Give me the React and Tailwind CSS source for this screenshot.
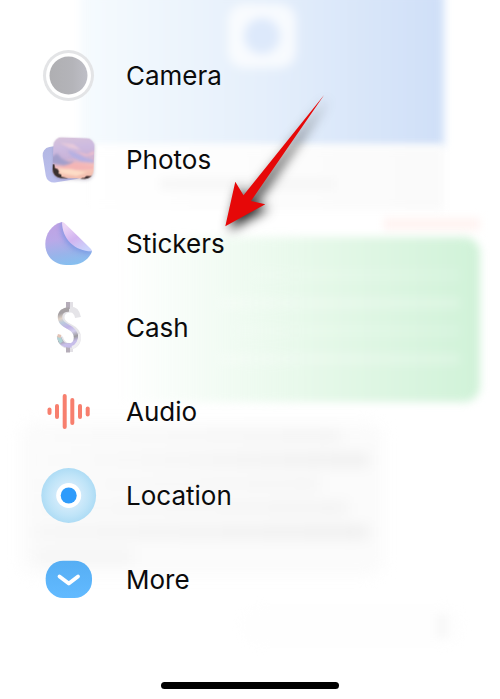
import React from 'react';

const CameraIcon = () => (
  <svg viewBox="0 0 56 56" className="h-14 w-14 shrink-0" aria-hidden="true">
    <defs>
      <linearGradient id="lens" x1="0" x2="1" y1="0" y2="0">
        <stop offset="0" stopColor="#afafb2" />
        <stop offset="0.6" stopColor="#b4b4b9" />
        <stop offset="1" stopColor="#bfbfc7" />
      </linearGradient>
    </defs>
    <circle cx="27.5" cy="27.5" r="25.5" fill="#e3e4e6" />
    <circle cx="27.5" cy="27.5" r="22.5" fill="#ffffff" />
    <circle cx="27.5" cy="27.5" r="19" fill="url(#lens)" />
  </svg>
);

const PhotosIcon = () => (
  <svg viewBox="0 0 56 56" className="h-14 w-14 shrink-0 overflow-visible" aria-hidden="true">
    <defs>
      <linearGradient id="sky" x1="0" x2="0.15" y1="0" y2="1">
        <stop offset="0" stopColor="#d8c3d9" />
        <stop offset="0.3" stopColor="#cdbbe0" />
        <stop offset="0.55" stopColor="#c9b3d8" />
        <stop offset="0.72" stopColor="#eebabf" />
        <stop offset="0.88" stopColor="#f8cbb8" />
        <stop offset="1" stopColor="#f3bfb0" />
      </linearGradient>
      <linearGradient id="backCard" x1="0" x2="0" y1="0" y2="1">
        <stop offset="0" stopColor="#b3b7e3" />
        <stop offset="1" stopColor="#bcc0ee" />
      </linearGradient>
      <clipPath id="photoClip">
        <rect x="12" y="5.5" width="41" height="41" rx="8.5" />
      </clipPath>
      <filter id="photoShadow" x="-20%" y="-20%" width="140%" height="140%" colorInterpolationFilters="sRGB">
        <feDropShadow dx="0.5" dy="1.5" stdDeviation="1.4" floodColor="#4b3b66" floodOpacity="0.25" />
      </filter>
      <filter id="cloud" x="-20%" y="-20%" width="140%" height="140%" colorInterpolationFilters="sRGB">
        <feGaussianBlur stdDeviation="1.3" />
      </filter>
    </defs>
    <rect x="3" y="13" width="38" height="36" rx="8" fill="url(#backCard)" transform="rotate(-9 22 31)" />
    <g transform="rotate(2 32 26)" filter="url(#photoShadow)">
      <g clipPath="url(#photoClip)">
        <rect x="12" y="5.5" width="41" height="41" fill="url(#sky)" />
        <g filter="url(#cloud)">
          <path d="M10 26 L16 22 L21 27 L28 30 L33 29 L29 33 L24 34 L10 32 Z" fill="#a39fcb" />
          <path d="M26 18 L34 21 L44 25 L53 27 L53 30 L40 29 L30 24 Z" fill="#b5b0e2" />
          <path d="M18 11 L32 12 L40 18 L28 16 Z" fill="#e6c9da" />
          <path d="M34 19 L46 22 L53 18 L53 22 L44 24 Z" fill="#eebecb" />
          <path d="M20 35 L32 31 L53 33 L53 37 L36 38 L22 38 Z" fill="#f4b5b5" />
          <path d="M18 37 L30 37 L46 40 L36 44 L20 41 Z" fill="#fddcc6" />
        </g>
        <path d="M12 33 L13.500 33 L14.500 37 L17 37.500 L18.500 40 L18 42 L21 43 L21 45 L26 46 L28 47 L12 47 Z" fill="#3a302f" />
        <path d="M40 47 L42 45.500 L44 45.500 L46 43.500 L50 43.500 L53 42 L53 47 Z" fill="#3a2b2d" />
      </g>
    </g>
  </svg>
);

const StickersIcon = () => (
  <svg viewBox="0 0 56 56" className="h-14 w-14 shrink-0" aria-hidden="true">
    <defs>
      <linearGradient id="stickerBody" x1="0.35" x2="0.5" y1="0" y2="0.9">
        <stop offset="0" stopColor="#c2a0e2" />
        <stop offset="0.45" stopColor="#b9a9e8" />
        <stop offset="0.75" stopColor="#98b4ea" />
        <stop offset="1" stopColor="#84c0f0" />
      </linearGradient>
      <linearGradient id="stickerFold" x1="0.2" x2="0.75" y1="0.1" y2="0.95">
        <stop offset="0" stopColor="#ecd6f5" />
        <stop offset="0.5" stopColor="#d2b4f0" />
        <stop offset="1" stopColor="#cbd2fb" />
      </linearGradient>
      <clipPath id="stickerClip">
        <path d="M21 6 C10.500 8.500 4.300 18 4.300 28 C4.300 41 14 49 25 49 L30 49 C40 49 48.500 43 51 35.300 Z" />
      </clipPath>
      <filter id="foldShadow" x="-30%" y="-30%" width="160%" height="160%" colorInterpolationFilters="sRGB">
        <feGaussianBlur stdDeviation="2.5" />
      </filter>
    </defs>
    <g clipPath="url(#stickerClip)">
      <rect width="56" height="56" fill="url(#stickerBody)" />
      <path d="M20 4 C18 20 26 37 53 38 Z" fill="#6a8ee2" opacity="0.65" filter="url(#foldShadow)" />
    </g>
    <path d="M21 6 C22.500 6 23.500 7 25 8.500 L49 32 C50.500 33.500 51 34.500 51 35.300 C34 35.500 21 23 21 6 Z" fill="url(#stickerFold)" />
  </svg>
);

const CashIcon = () => (
  <svg viewBox="0 0 56 56" className="h-14 w-14 shrink-0" aria-hidden="true">
    <defs>
      <linearGradient id="foil" x1="20" x2="34" y1="6" y2="50" gradientUnits="userSpaceOnUse">
        <stop offset="0" stopColor="#a9a4a6" />
        <stop offset="0.15" stopColor="#a5a0a3" />
        <stop offset="0.26" stopColor="#e0d3c8" />
        <stop offset="0.35" stopColor="#bccbdd" />
        <stop offset="0.48" stopColor="#c0b3e6" />
        <stop offset="0.6" stopColor="#d5d0ee" />
        <stop offset="0.72" stopColor="#9c9a9f" />
        <stop offset="0.82" stopColor="#c8bfea" />
        <stop offset="1" stopColor="#c3b8e8" />
      </linearGradient>
    </defs>
    <g fill="none" strokeLinecap="butt">
      <path d="M29.500 2 V9 M29.500 43 V52" stroke="#e2e0e5" strokeWidth="5" />
      <path d="M37 17.500 C36 12 33 9.500 29.500 9.500 C24 9.500 20.500 13 20.500 17.500 C20.500 23 25 25 29 27 C34 29.500 37 32 37 37.500 C37 42.500 34 46 29 46 C23.500 46 20 42.500 19 37" stroke="#e5e4e8" strokeWidth="6" />
      <path d="M27 2 V9 M27 43 V52.500" stroke="#b5adb9" strokeWidth="4" />
      <path d="M28 9.500 C22.500 9.500 19 12.500 19 17 C19 22.500 23 24.500 27.500 27 C32.500 29.500 35 32 35 37.500 C35 42.500 32.500 45.500 28 45.500 C22.500 45.500 19 42.500 18 36.500" stroke="url(#foil)" strokeWidth="4.500" />
      <path d="M17.800 36 C18.300 39 19 40.500 20.500 42.500" stroke="#b0d3d5" strokeWidth="4" />
      <path d="M16.500 35.500 L20 36.500" stroke="#e3c3b5" strokeWidth="3" />
      <path d="M38.500 34 C39.500 40 36 46 31 47.500" stroke="#efeef1" strokeWidth="3" />
    </g>
  </svg>
);

const AudioIcon = () => (
  <svg viewBox="0 0 56 56" className="h-14 w-14 shrink-0" aria-hidden="true">
    <g stroke="#f77f6e" strokeWidth="4" strokeLinecap="round">
      <path d="M8.500 25.500 V29" />
      <path d="M16 22 V33" />
      <path d="M23.700 12 V43" />
      <path d="M31.300 16 V39" />
      <path d="M39 22 V33" />
      <path d="M46.700 24.500 V30.500" />
    </g>
  </svg>
);

const LocationIcon = () => (
  <svg viewBox="0 0 56 56" className="h-14 w-14 shrink-0" aria-hidden="true">
    <defs>
      <radialGradient id="halo">
        <stop offset="0.4" stopColor="#d3ebfb" />
        <stop offset="0.75" stopColor="#bfe4f8" />
        <stop offset="1" stopColor="#aedcf5" />
      </radialGradient>
    </defs>
    <circle cx="27.700" cy="27.500" r="27.400" fill="url(#halo)" />
    <circle cx="27.700" cy="27.500" r="12.500" fill="#ffffff" />
    <circle cx="27.700" cy="27.500" r="8" fill="#2e9bfb" />
  </svg>
);

const MoreIcon = () => (
  <svg viewBox="0 0 56 56" className="h-14 w-14 shrink-0" aria-hidden="true">
    <defs>
      <linearGradient id="pill" x1="0" x2="0" y1="0" y2="1">
        <stop offset="0" stopColor="#56aef4" />
        <stop offset="1" stopColor="#62baff" />
      </linearGradient>
    </defs>
    <rect x="4.700" y="8.700" width="46.300" height="37.300" rx="17.500" fill="url(#pill)" />
    <path d="M18.500 24.500 L27.800 31.500 L37 24.500" fill="none" stroke="#ffffff" strokeWidth="3.800" strokeLinecap="round" strokeLinejoin="round" />
  </svg>
);

const items = [
  { label: 'Camera', Icon: CameraIcon },
  { label: 'Photos', Icon: PhotosIcon },
  { label: 'Stickers', Icon: StickersIcon },
  { label: 'Cash', Icon: CashIcon },
  { label: 'Audio', Icon: AudioIcon },
  { label: 'Location', Icon: LocationIcon },
  { label: 'More', Icon: MoreIcon }
];

// Faded conversation behind the menu
const Conversation = () => (
  <div className="col-start-1 row-start-1 flex flex-col overflow-hidden" aria-hidden="true">
    <div className="-mt-2 ml-20 mr-14 flex h-[154px] justify-center bg-linear-to-r from-[#f6fbfe] via-[#e5effb] to-[#cfdff8] blur-[4px]">
      <div className="mt-3 flex h-16 w-[68px] items-center justify-center rounded-2xl bg-white/75 blur-[2px]">
        <div className="h-9 w-9 rounded-full bg-[#dde9fb]" />
      </div>
    </div>
    <div className="ml-20 mr-14 h-16 bg-linear-to-r from-white to-[#fafafa] px-20 pt-8 blur-[4px]">
      <div className="h-3 w-44 bg-[#f7f7f7]" />
    </div>
    <div className="mr-5 mt-2 h-3 w-24 self-end bg-[#fff3f1] blur-[4px]" />
    <div className="ml-[120px] mr-5 mt-[7px] flex h-[165px] flex-col items-end gap-4 rounded-r-2xl bg-linear-to-r from-[#f5fdf6]/0 via-[#e8f9eb] to-[#d0f2d8] pr-5 pt-8 blur-[4px]">
      <div className="h-3 w-52 bg-white/10" />
      <div className="h-3 w-60 bg-white/20" />
      <div className="h-3 w-56 bg-white/10" />
      <div className="h-3 w-60 bg-white/20" />
    </div>
    <div className="ml-5 mr-[116px] mt-5 flex h-[154px] flex-col gap-3 rounded-2xl bg-[#fbfbfb] px-4 pt-2 blur-[7px]">
      <div className="mr-7 h-3 bg-linear-to-r from-[#fbfbfb] to-[#f3f3f3]" />
      <div className="h-3 bg-linear-to-r from-[#fbfbfb] to-[#ededed]" />
      <div className="mr-12 h-3 bg-linear-to-r from-[#fafafa] to-[#f4f4f4]" />
      <div className="mr-5 h-3 bg-linear-to-r from-[#f8f8f8] to-[#f2f2f2]" />
      <div className="h-3 bg-linear-to-r from-[#f5f5f5] to-[#ededed]" />
      <div className="h-3 w-24 bg-[#f4f4f4]" />
    </div>
    <div className="mr-9 mt-7 flex h-11 w-56 items-center justify-end self-end rounded-full bg-[#fefefe] pr-4 blur-[4px]">
      <div className="h-6 w-3 bg-[#f8f8f8]" />
    </div>
  </div>
);

const Arrow = () => (
  <svg viewBox="0 0 150 170" className="pointer-events-none absolute left-[200px] top-20 h-[170px] w-[150px] overflow-visible" aria-hidden="true">
    <defs>
      <filter id="arrowShadow" x="-40%" y="-40%" width="180%" height="180%" colorInterpolationFilters="sRGB">
        <feDropShadow dx="4" dy="4" stdDeviation="6" floodColor="#000000" floodOpacity="0.85" />
      </filter>
    </defs>
    <path
      d="M124.300 14.700 L43.500 115.300 L35.300 101.700 L25.300 146.300 L65.300 124.300 L51 121 Z"
      fill="#e60808"
      filter="url(#arrowShadow)"
    />
  </svg>
);

const App = () => {
  return (
    <main className="relative grid min-h-screen overflow-hidden bg-white font-['Inter',sans-serif] text-[#0b0b0c]">
      <Conversation />

      <div className="relative col-start-1 row-start-1 flex flex-col justify-between pb-[10px] pt-[34px]">
        <ul>
          {items.map(({ label, Icon }) => (
            <li key={label}>
              <button type="button" className="flex h-[84px] w-full items-center gap-[29px] pl-[41px] text-left text-[26px] leading-8">
                <Icon />
                <span>{label}</span>
              </button>
            </li>
          ))}
        </ul>
        <div className="h-[7px] w-[178px] self-center rounded-full bg-black" />
      </div>

      <Arrow />
    </main>
  );
};

export default App;
